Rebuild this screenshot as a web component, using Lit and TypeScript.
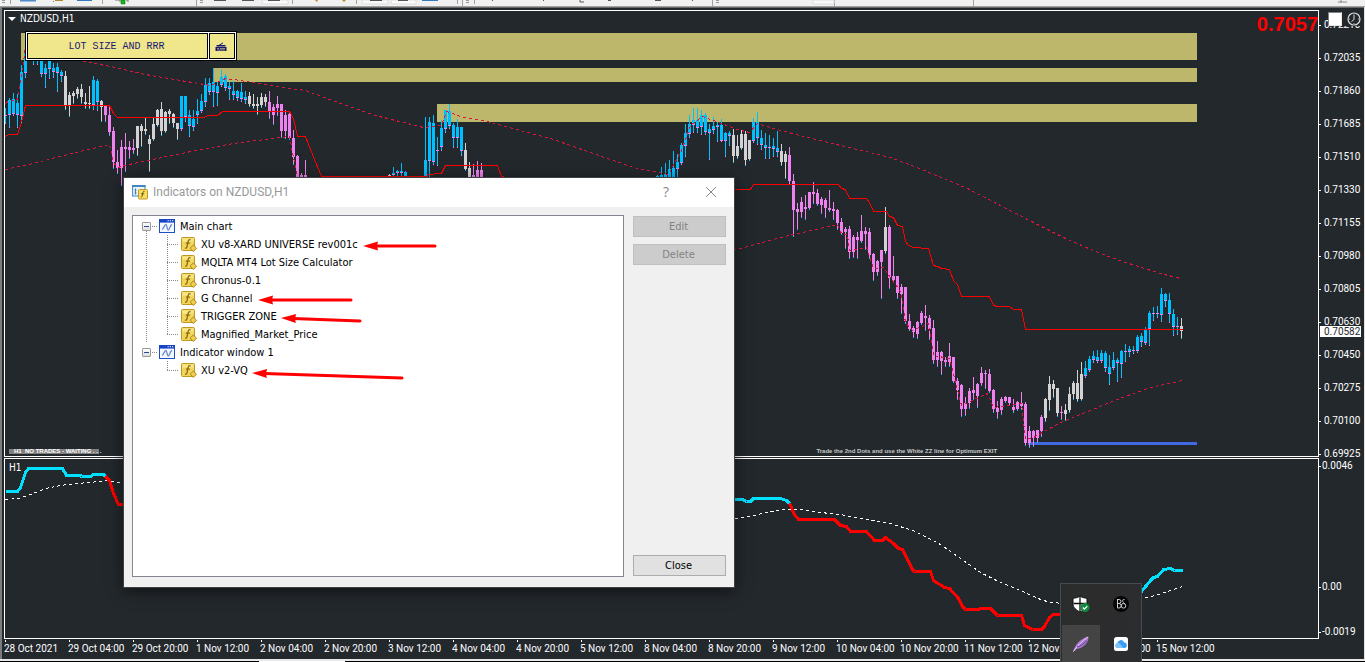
import { LitElement, html, svg, css } from "lit";
import { customElement } from "lit/decorators.js";

type Kind = "up" | "down" | "flat";

/** A run of neighbouring bars: start column, colour, and high/top/bottom/low of each bar. */
interface Run {
  x: number;
  kind: Kind;
  bars: string;
}

const BAR_STEP = 4;

const RUNS: Run[] = [
  { x: 5, kind: "up", bars: "108 115 116 123,98 100 115 127,93 99 114 115,94 103 115 127,65 72 116 122,43 50 73 77,40 44 58 60,42 45 61 64,42 46 61 64,50 60 74 76,64 68 74 87,60 61 69 78,63 68 72 77,63 67 73 91,70 72 76 81" },
  { x: 65, kind: "flat", bars: "71 76 105 109,92 95 105 116,91 93 96 103,87 89 94 98,84 89 97 103,93 102 104 108,86 103 104 108" },
  { x: 93, kind: "up", bars: "76 80 105 109,79 81 102 110" },
  { x: 101, kind: "flat", bars: "100 101 107 121" },
  { x: 105, kind: "down", bars: "105 106 115 121,106 115 132 135,127 131 162 168,150 162 168 173,140 147 168 185,133 147 149 171,141 147 150 158,139 148 150 153" },
  { x: 137, kind: "flat", bars: "126 126 148 155,124 126 131 146,117 129 131 134,135 139 144 171,118 124 139 140,109 110 125 126,102 109 131 135,111 112 131 132,109 111 114 123,113 114 123 127,123 123 129 139" },
  { x: 181, kind: "up", bars: "96 96 129 130,96 96 117 121,110 115 126 136,110 119 127 130,99 111 115 123,94 101 111 112,78 85 102 106,78 83 92 94,68 82 92 106,82 86 93 105,70 77 85 86,74 76 88 90,82 86 89 99,81 91 95 99,90 91 98 100,83 92 99 101,91 97 100 103" },
  { x: 249, kind: "flat", bars: "92 96 104 106,94 104 106 108,97 104 106 114,93 97 105 107,94 97 102 106" },
  { x: 269, kind: "down", bars: "91 102 111 118,104 107 115 124,96 104 108 115,104 104 131 137,110 115 131 138,111 114 138 139,130 138 157 164,155 156 177 190,173 175 178 190,160 175 178 190" },
  { x: 389, kind: "flat", bars: "174 175 178 180" },
  { x: 393, kind: "up", bars: "167 173 175 190,170 171 173 190,163 171 173 190,171 172 178 190" },
  { x: 425, kind: "up", bars: "117 160 178 182,117 122 161 178,115 123 162 164,137 150 151 165,120 128 147 150,110 110 129 132,104 111 126 128,123 125 138 147,119 127 138 147,127 127 151 155" },
  { x: 465, kind: "flat", bars: "143 150 169 170,162 168 178 180" },
  { x: 473, kind: "down", bars: "164 175 178 180,161 170 178 180,163 170 178 180" },
  { x: 657, kind: "up", bars: "175 176 178 180,167 175 178 180,163 174 178 180,160 169 178 180,151 168 178 180,154 162 169 177,143 145 163 164,124 133 146 156,115 124 134 137,108 120 125 132,108 120 128 132,110 115 127 134,113 115 132 134,124 129 133 159,117 126 130 133,122 125 127 141,119 125 141 141,132 133 141 156,131 133 136 145" },
  { x: 733, kind: "flat", bars: "129 135 156 162,135 146 156 158,130 134 148 149,131 134 160 165,140 140 159 160" },
  { x: 753, kind: "up", bars: "118 122 141 142,112 122 138 144,130 138 145 149,133 145 148 158,135 147 148 158,138 146 149 156,131 148 152 156" },
  { x: 781, kind: "flat", bars: "144 151 162 165,151 154 162 178" },
  { x: 789, kind: "down", bars: "147 155 181 184,174 181 210 236,203 209 212 229,197 202 212 217,195 207 209 219,192 192 208 209,182 192 194 203,189 193 204 205,197 199 205 213,198 200 208 217" },
  { x: 829, kind: "down", bars: "190 208 210 211,202 209 211 219,209 210 223 229,218 222 233 234,227 229 232 248,226 229 252 258,235 237 252 257,232 237 240 258,215 231 241 242,227 231 234 249,228 232 255 258,253 254 272 280,260 261 272 275,250 250 262 298" },
  { x: 885, kind: "flat", bars: "207 227 251 253" },
  { x: 889, kind: "down", bars: "225 227 278 288,256 276 280 281,276 276 293 298,284 287 294 313,287 287 321 323,314 321 329 330,326 328 332 337,321 322 334 338,311 313 323 324,305 316 318 330,315 318 329 339,320 328 360 363,341 352 360 366,351 352 361 374,357 360 362 366,343 356 362 366,357 357 381 382,378 381 390 399,384 385 409 416,397 403 409 415,388 391 403 408,377 390 393 399,383 384 396 407,367 373 383 385,370 373 374 388,369 374 391 392,389 390 409 412,401 408 412 418,397 399 410 414,396 397 401 402,397 397 403 405,399 407 410 412,401 402 409 410,392 403 406 409,402 404 443 445,426 431 443 447,430 431 438 446,430 430 438 442,415 417 431 436" },
  { x: 1045, kind: "flat", bars: "398 399 418 421,376 384 400 410,380 384 389 397,388 388 413 416" },
  { x: 1061, kind: "down", bars: "406 412 413 419" },
  { x: 1065, kind: "flat", bars: "404 410 414 420,387 394 410 412,381 383 394 399,370 383 399 401,362 374 399 400" },
  { x: 1085, kind: "up", bars: "361 368 376 377,356 359 370 371,351 356 360 362,350 357 361 362,350 353 361 362,351 353 368 371,355 367 374 384,352 360 368 369,358 360 363 381,350 351 364 377,344 351 352 361,346 349 352 356,346 350 351 353,335 337 351 352,333 336 342 346,327 329 343 344,311 313 329 345,307 313 314 320,306 313 314 317,288 294 315 321,293 294 301 306,293 300 314 322,309 314 327 335,317 326 327 334" },
  { x: 1181, kind: "flat", bars: "318 326 331 338" },
];

const CHANNEL_MID =
  "5,136 8,134 17,134 21,122 25,105 109,105 113,113 117,117 203,117 208,115 217,115 222,111 289,111 293,118 297,136 305,136 310,149 321,176 427,176 427,174 441,173 445,165 497,165 501,176 560,189 750,189 753,184 838,184 841,188 845,189 849,198 866,198 869,202 873,211 886,211 889,216 893,217 897,225 902,226 905,241 908,245 913,247 928,248 933,265 937,266 941,268 949,269 953,280 957,284 961,296 989,296 993,305 997,306 1009,306 1013,309 1021,309 1025,329 1182,329";
const CHANNEL_HIGH =
  "5,103 9,100 17,99 22,70 25,46 60,52 83,61 110,66 145,74 180,80 210,85 225,78 240,80 275,86 305,90 343,104 375,115 423,127 441,125 446,111 463,117 487,121 520,130 553,139 590,152 633,167 668,174 681,150 690,125 702,116 713,120 737,129 749,132 757,123 773,128 807,137 840,145 890,157 919,168 967,188 1027,219 1067,239 1100,253 1122,261 1160,273 1180,278";
const CHANNEL_LOW =
  "5,169 33,163 67,154 109,144 113,162 117,167 133,163 200,149 233,143 289,136 293,157 297,177 420,260 736,249 780,237 837,224 841,233 847,234 849,250 866,247 873,268 883,267 890,277 900,291 905,322 912,330 928,323 933,355 949,358 961,405 987,393 993,407 1021,403 1025,439 1033,437 1060,422 1122,397 1150,387 1182,380";

const ZONES = [
  { x: 21, y: 33, h: 27 },
  { x: 213, y: 68, h: 14 },
  { x: 437, y: 104, h: 18 },
];
const ZONE_RIGHT = 1197;

const VQ_LINES = [
  { cls: "rise", pts: "5,491 17,491 20,487 25,472 28,468 62,468 66,475 80,475 81,476 90,476 93,474 103,474 106,477" },
  { cls: "fall", pts: "105,476 109,480 113,493 118,504 130,504" },
  { cls: "rise", pts: "724,499 742,499 746,501 750,501 753,498 780,498 786,500 790,504" },
  { cls: "fall", pts: "789,503 794,514 798,519 834,519 840,525 846,526 850,531 866,531 874,540 882,540 885,537 893,543 898,548 902,549 912,569 914,571 930,571 933,580 944,587 949,588 958,598 962,606 965,609 978,609 980,608 990,608 997,615 1021,615 1024,625 1032,629 1041,629 1044,626 1049,617 1053,614 1068,614" },
  { cls: "rise", pts: "1130,602 1141,591 1150,580 1153,577 1157,576 1163,569 1170,568 1174,570 1182,570" },
];
const VQ_SIGNAL =
  "5,499 18,498 30,494 45,488 60,485 75,483 90,482 105,480 115,481 130,485 500,560 737,518 750,516 765,512 785,509 800,509 820,512 840,514 860,518 890,523 915,531 940,544 960,558 980,572 1000,582 1020,590 1040,599 1050,602 1080,604 1141,598 1155,595 1170,590 1182,586";

const PRICES = ["0.72210", "0.72035", "0.71860", "0.71685", "0.71510", "0.71330", "0.71155", "0.70980", "0.70805", "0.70630", "0.70450", "0.70275", "0.70100", "0.69925"];

const TIMES = ["28 Oct 2021", "29 Oct 04:00", "29 Oct 20:00", "1 Nov 12:00", "2 Nov 04:00", "2 Nov 20:00", "3 Nov 12:00", "4 Nov 04:00", "4 Nov 20:00", "5 Nov 12:00", "8 Nov 04:00", "8 Nov 20:00", "9 Nov 12:00", "10 Nov 04:00", "10 Nov 20:00", "11 Nov 12:00", "12 Nov 04:00", "12 Nov 20:00", "15 Nov 12:00"];

const TREE = [
  { name: "Main chart", items: ["XU v8-XARD UNIVERSE rev001c", "MQLTA MT4 Lot Size Calculator", "Chronus-0.1", "G Channel", "TRIGGER ZONE", "Magnified_Market_Price"] },
  { name: "Indicator window 1", items: ["XU v2-VQ"] },
];

/** Red pointers drawn over the list: tip and tail of each. */
const POINTERS = [
  [363, 246, 435, 246],
  [258, 300, 351, 300],
  [281, 318, 360, 321],
  [252, 373, 402, 378],
];

const windowIcon = svg`<svg class="ico" viewBox="0 0 16 16" width="16" height="16" aria-hidden="true">
  <rect x=".5" y="1.5" width="15" height="13" fill="#f4f8ff" stroke="#1d50c0"/>
  <rect x="0" y="1" width="16" height="3.6" fill="#1646c4"/>
  <path d="M8.6 2.7h1.2M10.8 2.7h1.2M13 2.7h1.2" stroke="#fff" stroke-width="1.1"/>
  <path d="M3 11.5C4.5 11 5.5 6.5 6.8 6.5S8 12 9.3 12 11 7 13 6.5" fill="none" stroke="#6b8bd0" stroke-width="1.3"/>
</svg>`;

const functionIcon = svg`<svg class="ico" viewBox="0 0 16 16" width="16" height="16" aria-hidden="true">
  <rect x=".5" y="1.5" width="13" height="13" rx="1" fill="#f0d558" stroke="#c09a20"/>
  <path d="M1.500 2.500h11v3h-11z" fill="#f8e88e"/>
  <path d="M9.600 3.800C7.700 3.200 7.300 4.400 6.900 6.400L6 10.800c-.3 1.200-1 1.600-2 1.200M4.800 7.200h4" fill="none" stroke="#8a6a14" stroke-width="1.300"/>
  <path d="M12.300 9l3.200 3.200-3.200 3.200-3.200-3.200z" fill="#f0cf50" stroke="#a98518"/>
</svg>`;

@customElement("indicator-dialog")
export class IndicatorDialog extends LitElement {
  static styles = css`
    :host {
      display: block;
      box-sizing: border-box;
      width: 612px;
      border: 1px solid #3d4145;
      background: #f0f0f0;
      box-shadow: 0 3px 14px rgba(0, 0, 0, 0.55);
      font: 11px/18px "DejaVu Sans Condensed", "Noto Sans", sans-serif;
      color: #000;
    }
    .title {
      display: flex;
      align-items: center;
      gap: 5px;
      box-sizing: border-box;
      height: 29px;
      padding: 0 16px 2px 8px;
      background: #fff;
      color: #999;
    }
    .title h2 {
      flex: 1;
      margin: 0;
      font: 12px/18px Roboto, "Noto Sans", sans-serif;
    }
    .tool {
      width: 14px;
      height: 18px;
      margin-left: 26px;
      padding: 0;
      border: 0;
      background: none;
      color: #888;
      font: 14px/18px "Open Sans", sans-serif;
    }
    .tool svg {
      display: block;
    }
    .body {
      display: flex;
      gap: 9px;
      padding: 8px 8px 10px;
    }
    .tree {
      position: relative;
      flex: 1;
      box-sizing: border-box;
      height: 362px;
      margin: 0;
      padding: 1px 0 0 9px;
      border: 1px solid #828790;
      background: #fff;
      list-style: none;
    }
    .tree ul {
      margin: 0;
      padding: 0;
      list-style: none;
    }
    .group:not(:last-of-type) {
      background: repeating-linear-gradient(#888 0 1px, transparent 1px 2px) 4px 14px / 1px 100% no-repeat;
    }
    .node {
      display: flex;
      align-items: center;
      height: 18px;
      white-space: nowrap;
    }
    .ico {
      display: block;
      flex: none;
    }
    .twist {
      flex: none;
      box-sizing: border-box;
      width: 9px;
      height: 9px;
      padding: 0;
      border: 1px solid #9a9a9a;
      border-radius: 1px;
      background: linear-gradient(#284a9a, #284a9a) center / 5px 1px no-repeat, linear-gradient(#fff, #ddd);
    }
    .dots {
      width: 6px;
      height: 1px;
      margin: 0 1px;
      background: repeating-linear-gradient(90deg, #888 0 1px, transparent 1px 2px);
    }
    .label {
      margin-left: 5px;
      padding-top: 2px;
    }
    .leaf .ico {
      margin-left: 3px;
    }
    .leaf .label {
      margin-left: 4px;
    }
    .leaf::before {
      content: "";
      width: 11px;
      height: 18px;
      margin-left: 25px;
      background:
        repeating-linear-gradient(#888 0 1px, transparent 1px 2px) 0 0 / 1px 100% no-repeat,
        repeating-linear-gradient(90deg, #888 0 1px, transparent 1px 2px) 0 9px / 100% 1px no-repeat;
    }
    .leaf:last-child::before {
      background-size: 1px 10px, 100% 1px;
    }
    .actions {
      display: flex;
      flex-direction: column;
      gap: 7px;
      width: 93px;
      padding: 1px 0;
    }
    .actions button {
      height: 21px;
      padding: 0 2px 0 0;
      border: 1px solid #adadad;
      background: #e1e1e1;
      font: inherit;
      line-height: 18px;
      color: #000;
    }
    .actions button:disabled {
      border-color: #bfbfbf;
      background: #ccc;
      color: #838383;
    }
    .actions .close {
      margin-top: auto;
    }
    .pointers {
      position: absolute;
      left: 0;
      top: 0;
      width: 100%;
      height: 100%;
      pointer-events: none;
    }
  `;

  private pointer([x1, y1, x2, y2]: number[]) {
    const a = (Math.atan2(y2 - y1, x2 - x1) * 180) / Math.PI;
    const len = Math.hypot(x2 - x1, y2 - y1);
    return svg`<g transform="translate(${x1} ${y1}) rotate(${a})" fill="#ff0000">
      <path d="M0 0L15 -4.5L14 0L15 4.5Z"/>
      <path d="M12 0H${len}" stroke="#ff0000" stroke-width="3" stroke-linecap="round"/>
    </g>`;
  }

  render() {
    return html`
      <div class="title">
        <svg class="ico" viewBox="0 0 16 16" width="16" height="16" aria-hidden="true">
          <rect x=".6" y="2" width="12.4" height="10" fill="#e8f3fc" stroke="#3f87bd" />
          <path d="M0 2h13.6" stroke="#3f87bd" stroke-width="2" />
          <path d="M3.5 4.5v6M2.5 6h2M2.5 9h2M6.5 6v3" stroke="#4a7fa8" fill="none" />
          <rect x="6.5" y="5.5" width="9" height="9.5" rx="1" fill="#f6dd63" stroke="#c09a20" />
          <path d="M12.6 7.2c-1.4-.3-1.6.8-1.9 2.2l-.6 2.6c-.2.8-.7 1-1.3.9M9.2 9.8h3" fill="none" stroke="#6b5410" />
        </svg>
        <h2>Indicators on NZDUSD,H1</h2>
        <button class="tool" aria-label="Help">?</button>
        <button class="tool" aria-label="Close window">
          <svg viewBox="0 0 14 18" width="14" height="18"><path d="M2 4l10 10M12 4L2 14" stroke="#888" fill="none" /></svg>
        </button>
      </div>
      <div class="body">
        <ul class="tree">
          ${TREE.map(
            (g) => html`<li class="group">
              <div class="node">
                <button class="twist" aria-label="Collapse ${g.name}"></button><span class="dots"></span>
                ${windowIcon}<span class="label">${g.name}</span>
              </div>
              <ul>
                ${g.items.map((n) => html`<li class="node leaf">${functionIcon}<span class="label">${n}</span></li>`)}
              </ul>
            </li>`
          )}
          <svg class="pointers" viewBox="133 216 490 360" preserveAspectRatio="xMinYMin meet" aria-hidden="true">
            ${POINTERS.map((p) => this.pointer(p))}
          </svg>
        </ul>
        <div class="actions">
          <button disabled>Edit</button>
          <button disabled>Delete</button>
          <button class="close">Close</button>
        </div>
      </div>
    `;
  }
}

@customElement("tray-popup")
export class TrayPopup extends LitElement {
  static styles = css`
    :host {
      display: grid;
      grid-template-columns: 38px 38px;
      grid-auto-rows: 37px;
      gap: 3px 2px;
      box-sizing: border-box;
      padding: 1px 1px 0;
      border: 1px solid #484b4e;
      border-bottom: 0;
      background: #2b2b2b linear-gradient(100deg, #2a2d2d, #2d2c2d 50%, #2a2d30);
    }
    button {
      display: grid;
      place-items: center;
      padding: 0;
      border: 0;
      background: none;
    }
    .hot {
      background: #444;
    }
  `;

  render() {
    return html`
      <button aria-label="Windows Security">
        <svg viewBox="0 0 18 18" width="18" height="18">
          <path d="M8 1c2 1.500 4 2 7 2.200V9c0 3.500-3 6-7 8C4 15 1 12.500 1 9V3.200C4 3 6 2.500 8 1z" fill="#fff" stroke="#111" />
          <path d="M8 1.500v15M1.500 8.500h13" stroke="#111" stroke-width="1.300" />
          <circle cx="13" cy="12.500" r="4.500" fill="#10893e" />
          <path d="M10.800 12.500l1.600 1.600 2.900-3" stroke="#fff" stroke-width="1.300" fill="none" />
        </svg>
      </button>
      <button aria-label="Audio control">
        <svg viewBox="0 0 18 18" width="18" height="18">
          <circle cx="9" cy="9" r="8" fill="#050505" />
          <path d="M5.500 4v9M5.500 4.500h1.500a2 2 0 010 4H5.500M5.500 8.500H7a2.200 2.200 0 010 4.500H5.500M12.500 4.500c-2-.5-2.500 2-1 3l1.500 1.500" stroke="#ccc" fill="none" />
          <circle cx="11.500" cy="10.800" r="2.300" stroke="#ccc" fill="none" />
        </svg>
      </button>
      <button class="hot" aria-label="Feather">
        <svg viewBox="0 0 18 18" width="18" height="18">
          <path d="M1 17C3 9 9 3 16.500 1.500 17 7 12 13 4.500 14z" fill="#a777cf" />
          <path d="M1.500 16.500C6 10 10 6 16 2" stroke="#e8d4f6" fill="none" />
          <path d="M5 12c4-1 7-3 9.500-6.500" stroke="#6c3f98" fill="none" />
        </svg>
      </button>
      <button aria-label="Cloud storage">
        <svg viewBox="0 0 18 18" width="18" height="18">
          <rect x="2" y="2" width="14" height="14" rx="2.500" fill="#fff" />
          <path d="M5.500 13a2.500 2.500 0 01-.3-4.900A3.600 3.600 0 0112 7.200 3 3 0 0113 13z" fill="#3b9cf5" />
          <path d="M5.500 13a2.500 2.500 0 01-.3-4.900c3-.6 4 2.500 6.500 4.900z" fill="#7cc4fb" />
        </svg>
      </button>
    `;
  }
}

@customElement("app-root")
export class AppRoot extends LitElement {
  static styles = css`
    :host {
      position: relative;
      display: flex;
      flex-direction: column;
      height: 100vh;
      min-height: 600px;
      overflow: hidden;
      background: #23282c;
      color: #fff;
      font: 10px/14px Roboto, "DejaVu Sans Condensed", sans-serif;
    }
    .toolbar {
      flex: none;
      height: 6px;
      overflow: hidden;
      border-bottom: 1px solid #a0a0a0;
      box-shadow: 0 1px #696969;
      background: #f0f0f0;
    }
    .toolbar svg {
      display: block;
    }
    .chart {
      flex: 1;
      display: grid;
      grid-template-columns: minmax(0, 1fr) 45px;
      grid-template-rows: minmax(0, 447fr) minmax(0, 181fr) 19px;
      row-gap: 1px;
      min-height: 0;
      padding: 3px 0 0 2px;
      border: solid #7c7c7c;
      border-width: 0 1px 0 2px;
      border-right-color: #e3e3e3;
    }
    .pane {
      position: relative;
      min-height: 0;
      border: 1px solid #fff;
    }
    .plot {
      position: absolute;
      inset: 0;
      width: 100%;
      height: 100%;
      shape-rendering: crispEdges;
    }
    .plot polyline {
      fill: none;
      vector-effect: non-scaling-stroke;
    }
    .zone { fill: #bdb76b; }
    .support { fill: #4169e1; }
    .mid { stroke: #f00; stroke-width: 1; }
    .edge { stroke: #dc143c; stroke-width: 1; stroke-dasharray: 3 3; }
    .signal { stroke: #fff; stroke-width: 1; stroke-dasharray: 3 3; }
    .rise { stroke: #00e0ff; stroke-width: 3; }
    .fall { stroke: #f00; stroke-width: 3; }
    .up { fill: #00bfff; }
    .down { fill: #ee82ee; }
    .flat { fill: #d3d3d3; }
    .symbol {
      position: absolute;
      left: 3px;
      top: 1px;
      display: flex;
      align-items: center;
      gap: 4px;
      font: 10px/14px "DejaVu Sans Condensed", sans-serif;
    }
    .symbol::before {
      content: "";
      border: 4px solid transparent;
      border-top-color: #fff;
      border-bottom: 0;
    }
    .sub-name {
      position: absolute;
      left: 4px;
      top: 2px;
      font: 10px/14px "DejaVu Sans Condensed", sans-serif;
    }
    .magnified {
      position: absolute;
      right: 0;
      top: 2px;
      font: bold 20px/22px "Liberation Sans", sans-serif;
      color: #f00;
    }
    .status,
    .hint {
      position: absolute;
      bottom: 1px;
      font: bold 6px/7px "Liberation Sans", sans-serif;
      white-space: pre;
    }
    .status {
      left: 4px;
      padding-left: 5px;
      background: linear-gradient(#808080, #808080) 0 1px / 90px 5px no-repeat;
    }
    .hint {
      left: 61.8%;
      color: #c8c8c8;
    }
    .lot {
      position: absolute;
      left: 20px;
      top: 20px;
      display: flex;
      gap: 1px;
      padding: 1px;
      border: 1px solid #000;
      background: #fff;
    }
    .lot button {
      display: grid;
      place-items: center;
      box-sizing: border-box;
      height: 26px;
      padding: 2px 2px 0 0;
      border: 1px solid #000;
      background: #f0e68c;
      font: 10px/14px "Liberation Mono", monospace;
      color: #191970;
    }
    .lot .main { width: 181px; }
    .lot .pad { width: 26px; }
    .scale {
      position: relative;
      display: flex;
      flex-direction: column;
      justify-content: space-between;
      margin-bottom: -4px;
      padding-top: 8px;
    }
    .scale span {
      display: flex;
      align-items: center;
      gap: 3px;
      height: 14px;
    }
    .scale span::before,
    .sub-scale span::before {
      content: "";
      width: 2px;
      height: 1px;
      background: #fff;
    }
    .scale .last {
      position: absolute;
      left: 1px;
      box-sizing: border-box;
      width: 41px;
      height: 11px;
      margin-top: -5px;
      padding-left: 4px;
      background: #fff;
      color: #23282c;
    }
    .scale .last::before { display: none; }
    .sub-scale {
      display: grid;
      grid-template-rows: 121fr 45fr auto;
    }
    .sub-scale span {
      display: flex;
      align-items: center;
      gap: 1px;
      height: 14px;
      padding-top: 1px;
    }
    .times {
      display: grid;
      grid-template-columns: repeat(20, minmax(0, 64fr)) minmax(0, 35fr);
      white-space: nowrap;
    }
    .times span::before {
      content: "";
      display: block;
      width: 1px;
      height: 2px;
      margin-left: 1px;
      background: #fff;
    }
    .corner {
      position: absolute;
      right: 4px;
      top: 12px;
      display: flex;
      align-items: center;
      gap: 5px;
      background: #23282c;
    }
    .corner input {
      appearance: none;
      box-sizing: border-box;
      width: 14px;
      height: 14px;
      margin: 0;
      border: 1px solid #808080;
      border-right-color: #e8e8e8;
      border-bottom-color: #e8e8e8;
      background: #fff;
    }
    .corner svg { display: block; }
    .foot {
      flex: none;
      height: 1px;
      border-top: 2px solid #e8e8e8;
      background: linear-gradient(#fff, #fff) 259px 0 / 86px 1px no-repeat #000;
    }
    indicator-dialog {
      position: absolute;
      left: 123px;
      top: 177px;
    }
    tray-popup {
      position: absolute;
      right: 223px;
      bottom: 0;
    }
  `;

  private bars(run: Run) {
    return run.bars.split(",").map((b, i) => {
      const [high, top, bottom, low] = b.split(" ").map(Number);
      const x = run.x + i * BAR_STEP;
      const up = run.kind === "up";
      return svg`<g class=${run.kind}>
        <rect x=${x} y=${high} width="1" height=${low - high + 1}></rect>
        <rect x=${x - 1} y=${top} width="3" height=${Math.max(1, bottom - top)}></rect>
        <rect class=${up ? "down" : "up"} x=${x} y=${low} width="1" height="1"></rect>
        ${up ? svg`<rect class="down" x=${x - 1} y=${bottom - 1} width="3" height="1"></rect>` : null}
      </g>`;
    });
  }

  private toolbar() {
    return html`<header class="toolbar">
      <svg width="1365" height="6" viewBox="0 0 1365 6" aria-hidden="true">
        <path d="M10.500 0v4M102.500 0v4M356.500 0v4M457.500 0v4M474.500 0v4M196.500 0v6M462.500 0v6M712.500 0v6M834.500 0v6M973.500 0v6M292.500 0v4" stroke="#a0a0a0" />
        <path d="M2 .5h3M2 2.500h3M200 .5h3M200 2.500h3M466 .5h3M466 2.500h3M716 .5h3M716 2.500h3" stroke="#999" />
        <path d="M20 0h16v1.500H20z" fill="#4d8ac8" />
        <path d="M77 0h15v1H77zM422 0h16v1H422z" fill="#3579bd" />
        <path d="M55 0h8v1h-8zM315 0l2 2 1-2zM342 0l2 2 2-2z" fill="#b5892a" />
        <path d="M121 0h4v4h-4z" fill="#19b519" stroke="#0a7a0a" stroke-width=".5" />
        <path d="M115 0h5v2M126 0h2v2M53 1.500h1" stroke="#777" fill="none" />
        <path d="M262 0h26v4h-26zM362 0h26v4h-26zM391 0h25v4h-25zM813 0h21v4h-21z" fill="#fafafa" stroke="#ddd" />
        <path d="M214 .5h12M242 .5h12M268 .5h12M370 .5h12M398 .5h10M655 .5h6M580 0v2h4M608 .5h3M492 .5h1M543 .5h1M692 .5h1" stroke="#555" fill="none" />
        <path d="M1338 2h9M1341 0v3" stroke="#888" fill="none" />
      </svg>
    </header>`;
  }

  render() {
    const last = ((330.5 - 10) / 450) * 100;
    return html`
      ${this.toolbar()}
      <main class="chart">
        <section class="pane">
          <svg class="plot" viewBox="5 11 1313 445" preserveAspectRatio="none" role="img" aria-label="NZDUSD price chart">
            ${ZONES.map((z) => svg`<rect class="zone" x=${z.x} y=${z.y} width=${ZONE_RIGHT - z.x} height=${z.h}></rect>`)}
            <rect class="support" x="1028" y="442" width="169" height="3"></rect>
            ${RUNS.map((r) => this.bars(r))}
            <polyline class="mid" points=${CHANNEL_MID} transform="translate(.5 .5)"></polyline>
            <polyline class="edge" points=${CHANNEL_HIGH} transform="translate(.5 .5)"></polyline>
            <polyline class="edge" points=${CHANNEL_LOW} transform="translate(.5 .5)"></polyline>
          </svg>
          <span class="symbol">NZDUSD,H1</span>
          <span class="magnified">0.7057</span>
          <div class="lot">
            <button class="main">LOT SIZE AND RRR</button>
            <button class="pad" aria-label="Open calculator">
              <svg viewBox="0 0 12 10" width="12" height="10">
                <path d="M3 4L8 .8" stroke="#191970" fill="none" />
                <path d="M1.500 3h9v1.500h-9zM.5 5h11v4H.5z" fill="#191970" />
                <path d="M2 6.500h2M5 6.500h5M2 8h8" stroke="#f0e68c" stroke-width=".6" />
              </svg>
            </button>
          </div>
          <span class="status">H1  NO TRADES - WAITING . . .</span>
          <span class="hint">Trade the 2nd Dots and use the White ZZ line for Optimum EXIT</span>
        </section>
        <div class="scale">
          ${PRICES.map((p) => html`<span>${p}</span>`)}
          <span class="last" style="top:${last.toFixed(2)}%">0.70582</span>
        </div>
        <section class="pane">
          <svg class="plot" viewBox="5 459 1313 179" preserveAspectRatio="none" role="img" aria-label="VQ indicator">
            <polyline class="signal" points=${VQ_SIGNAL} transform="translate(.5 .5)"></polyline>
            ${VQ_LINES.map((l) => svg`<polyline class=${l.cls} points=${l.pts} transform="translate(.5 .5)"></polyline>`)}
          </svg>
          <span class="sub-name">H1</span>
        </section>
        <div class="sub-scale"><span>0.0046</span><span>0.00</span><span>-0.0019</span></div>
        <div class="times">${TIMES.map((t) => html`<span>${t}</span>`)}</div>
      </main>
      <div class="foot"></div>
      <div class="corner">
        <input type="checkbox" aria-label="Show clock" />
        <svg viewBox="0 0 14 14" width="14" height="14" aria-hidden="true">
          <circle cx="7" cy="7" r="6" fill="#23282c" stroke="#ddd" stroke-width="1.200" />
          <path d="M7 2.500V7.500L4.500 9.500" stroke="#ddd" fill="none" />
          <path d="M7 11v1M2 7h1M11 7h1" stroke="#bbb" />
        </svg>
      </div>
      <indicator-dialog></indicator-dialog>
      <tray-popup></tray-popup>
    `;
  }
}
